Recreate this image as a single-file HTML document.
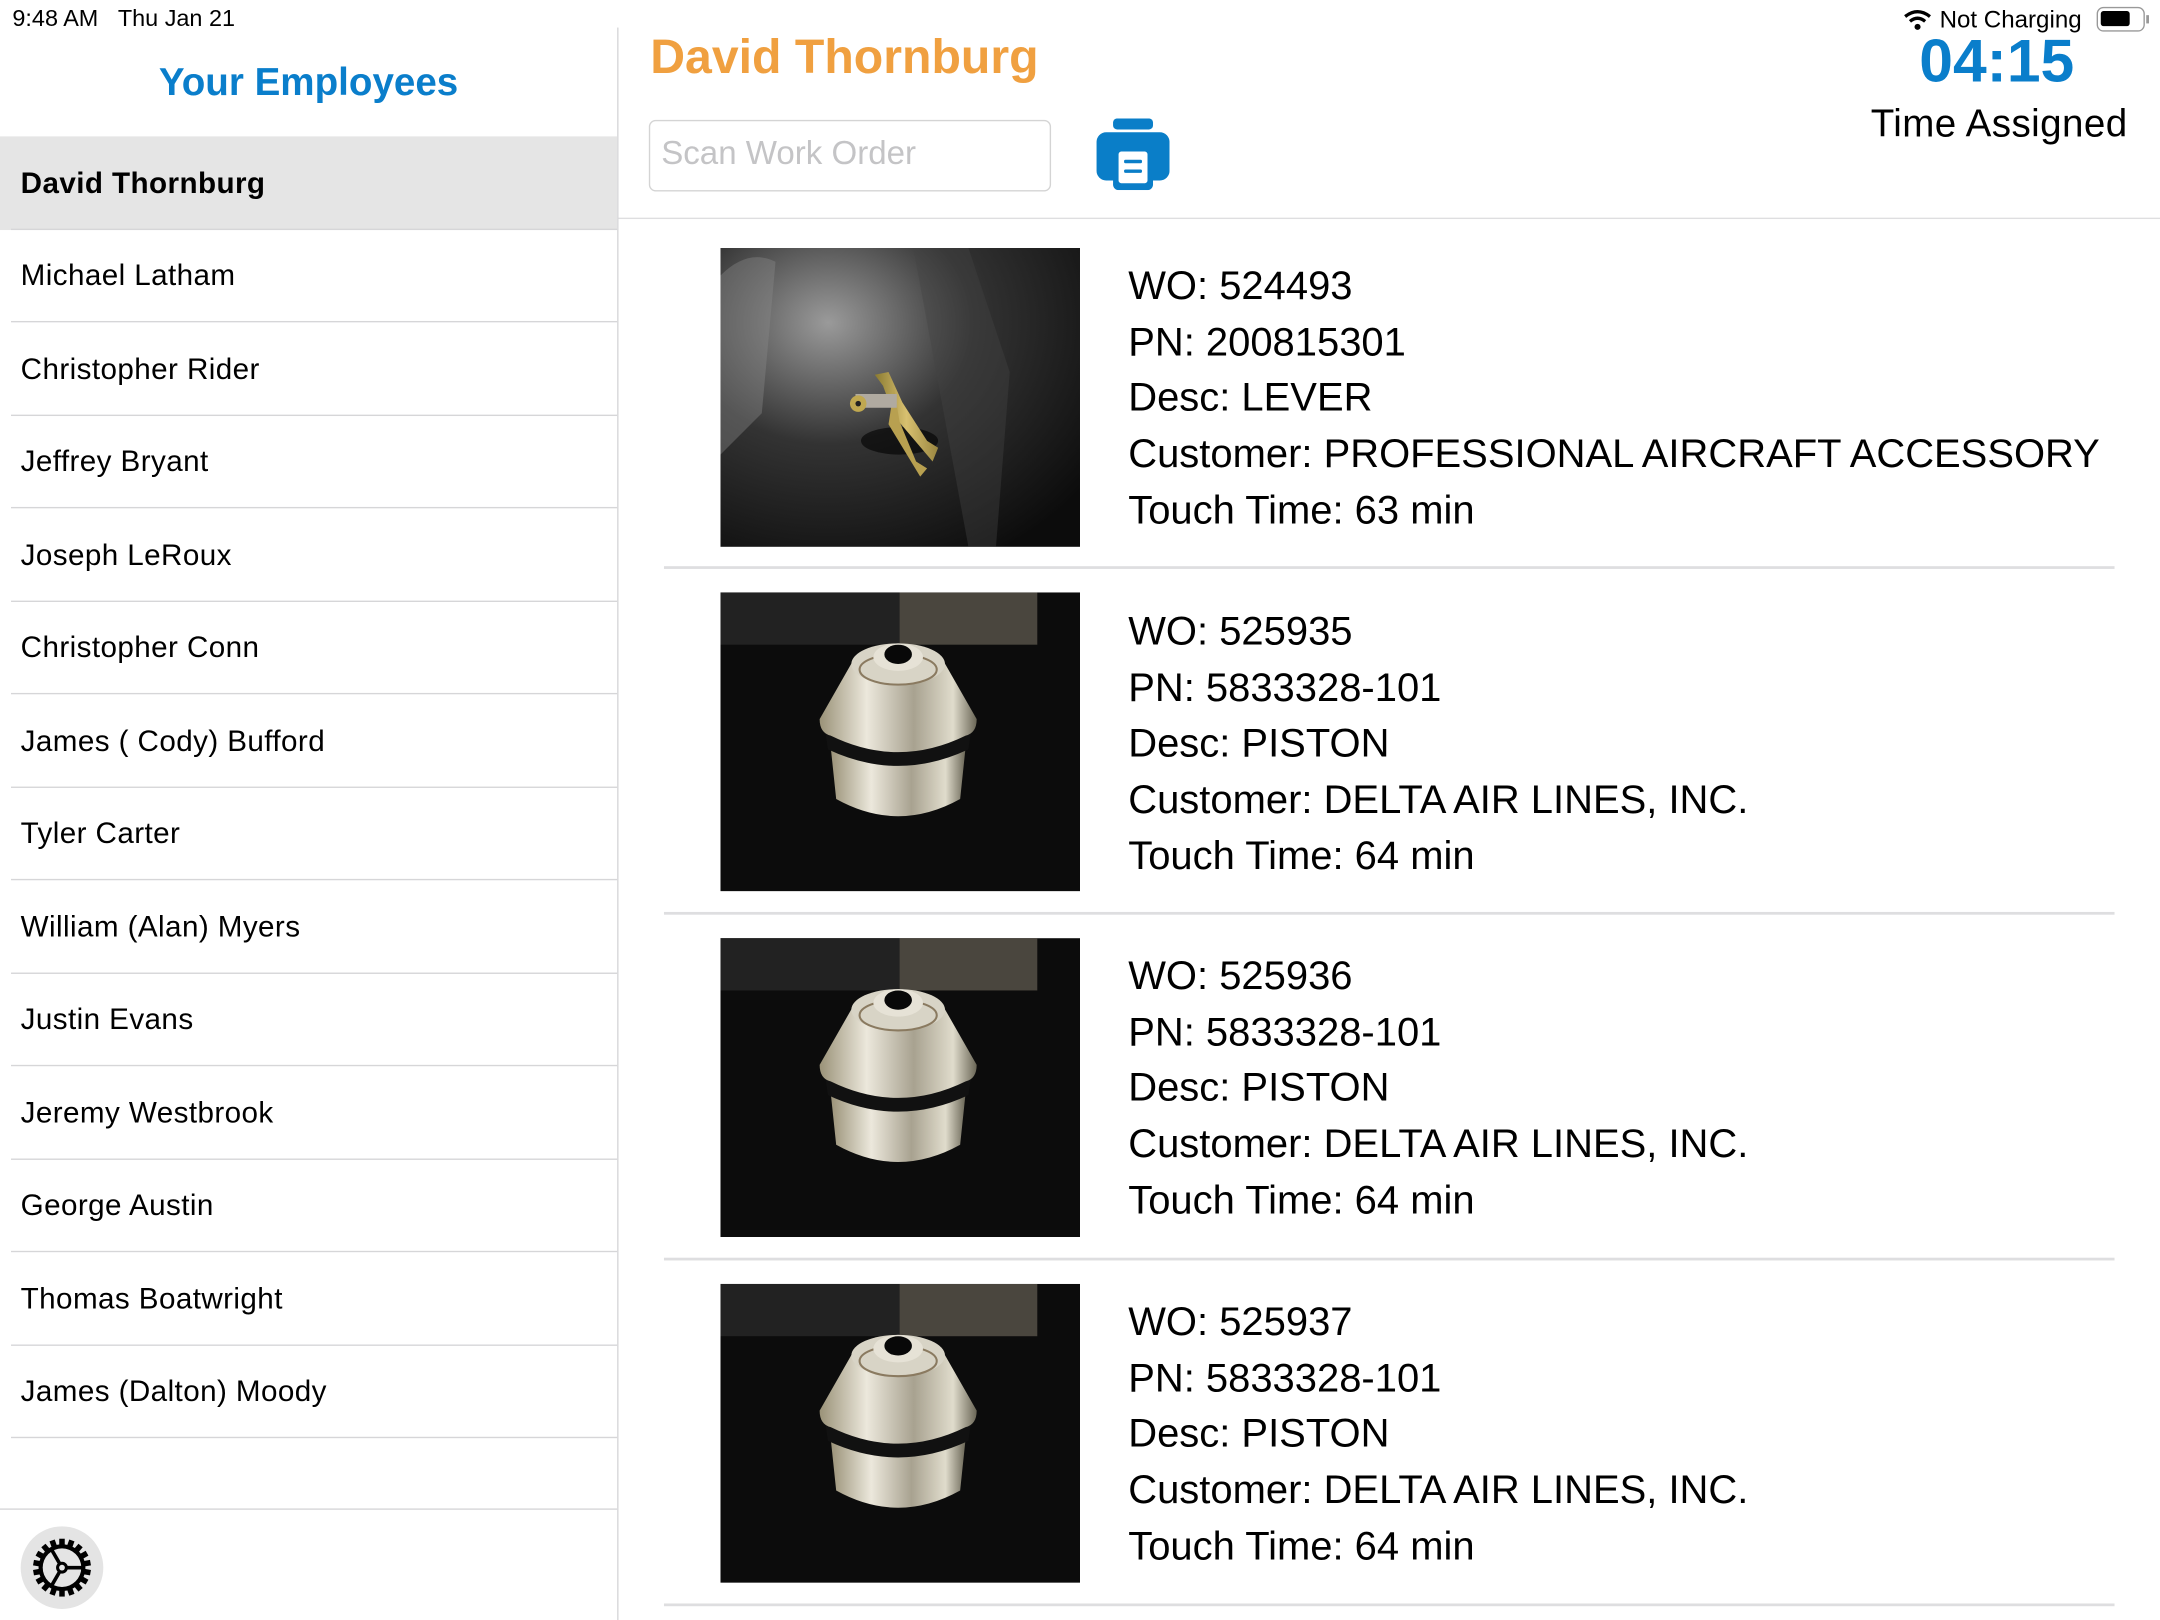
<!DOCTYPE html>
<html><head><meta charset="utf-8"><style>
*{margin:0;padding:0;box-sizing:border-box}
html,body{width:2160px;height:1620px;overflow:hidden;background:#fff}
#w{position:absolute;left:0;top:0;width:1568px;height:1176px;transform:scale(1.377551);transform-origin:0 0;font-family:"Liberation Sans",Arial,sans-serif;color:#000}
.a{position:absolute}
.row{position:absolute;left:0;width:448px;height:67.5px;font-size:21.5px;padding-left:15px;line-height:69px;letter-spacing:0.3px}
.sep{position:absolute;left:8px;width:440px;height:1px;background:#d6d6d8}
.txt{position:absolute;left:819px;font-size:29px;line-height:40.7px}
.img{position:absolute;left:523px;width:261px;height:217px}
.hsep{position:absolute;left:482px;width:1053px;height:2px;background:#dedee0}
</style></head><body><div id="w">
<svg width="0" height="0" style="position:absolute"><defs>
<radialGradient id="bg1" cx="0.3" cy="0.25" r="0.9"><stop offset="0" stop-color="#9a9a9a"/><stop offset="0.45" stop-color="#333"/><stop offset="1" stop-color="#0c0c0c"/></radialGradient>
<linearGradient id="met" x1="0" x2="1"><stop offset="0" stop-color="#9a9278"/><stop offset="0.3" stop-color="#ece8dc"/><stop offset="0.6" stop-color="#a8a290"/><stop offset="0.85" stop-color="#e0dccc"/><stop offset="1" stop-color="#6a6656"/></linearGradient>
<linearGradient id="gold" x1="0" x2="1"><stop offset="0" stop-color="#8a7a30"/><stop offset="0.5" stop-color="#d8c070"/><stop offset="1" stop-color="#9a8640"/></linearGradient>
<symbol id="pist" viewBox="0 0 261 217">
<rect width="261" height="217" fill="#0c0c0c"/>
<rect x="130" y="0" width="100" height="38" fill="#4a463e"/>
<rect x="0" y="0" width="130" height="38" fill="#222"/>
<path d="M80 112 L84 150 Q129 175 174 150 L178 112 Q129 135 80 112Z" fill="url(#met)"/>
<path d="M76 100 Q129 128 182 100 L180 114 Q129 138 78 114Z" fill="#111"/>
<path d="M96 50 L72 92 Q72 102 80 104 Q129 128 178 104 Q186 102 186 92 L162 50Z" fill="url(#met)"/>
<ellipse cx="129" cy="52" rx="34" ry="15" fill="#d8d4c6"/>
<ellipse cx="129" cy="56" rx="28" ry="11" fill="none" stroke="#8a7a60" stroke-width="1.5"/>
<ellipse cx="129" cy="47" rx="18" ry="10" fill="#e6e2d6"/>
<ellipse cx="129" cy="45" rx="10" ry="7" fill="#080808"/>
</symbol>
</defs></svg>

<div class="a" style="left:9px;top:4px;font-size:17px">9:48 AM&nbsp;&nbsp;&nbsp;Thu Jan 21</div>
<svg class="a" style="left:1382px;top:7px" width="20" height="15" viewBox="0 0 20 15"><path d="M1 5 Q10 -2 19 5" stroke="#000" stroke-width="2.4" fill="none"/><path d="M4.5 8.5 Q10 4 15.5 8.5" stroke="#000" stroke-width="2.4" fill="none"/><circle cx="10" cy="12.5" r="2.2"/></svg>
<div class="a" style="left:1408px;top:4px;font-size:17.5px">Not Charging</div>
<div class="a" style="left:1522px;top:5px;width:35px;height:18px;border:1.5px solid #999;border-radius:5px"><div style="margin:2px;width:21px;height:11px;background:#000;border-radius:2px"></div></div>
<div class="a" style="left:1558px;top:11px;width:2px;height:6px;background:#999"></div>

<div class="a" style="left:0;top:44px;width:448px;text-align:center;font-size:28px;font-weight:bold;color:#0a7ecb">Your Employees</div>
<div class="a" style="left:448px;top:20px;width:1px;height:1156px;background:#d6d6d8"></div>
<div class="row" style="top:99px;background:#e5e5e5;font-weight:bold">David Thornburg</div>
<div class="row" style="top:166px">Michael Latham</div>
<div class="row" style="top:234px">Christopher Rider</div>
<div class="row" style="top:301px">Jeffrey Bryant</div>
<div class="row" style="top:369px">Joseph LeRoux</div>
<div class="row" style="top:436px">Christopher Conn</div>
<div class="row" style="top:504px">James ( Cody) Bufford</div>
<div class="row" style="top:571px">Tyler Carter</div>
<div class="row" style="top:639px">William (Alan) Myers</div>
<div class="row" style="top:706px">Justin Evans</div>
<div class="row" style="top:774px">Jeremy Westbrook</div>
<div class="row" style="top:841px">George Austin</div>
<div class="row" style="top:909px">Thomas Boatwright</div>
<div class="row" style="top:976px">James (Dalton) Moody</div>
<div class="sep" style="top:166px"></div><div class="sep" style="top:233px"></div><div class="sep" style="top:301px"></div><div class="sep" style="top:368px"></div><div class="sep" style="top:436px"></div><div class="sep" style="top:503px"></div><div class="sep" style="top:571px"></div><div class="sep" style="top:638px"></div><div class="sep" style="top:706px"></div><div class="sep" style="top:773px"></div><div class="sep" style="top:841px"></div><div class="sep" style="top:908px"></div><div class="sep" style="top:976px"></div><div class="sep" style="top:1043px"></div>
<div class="a" style="left:0;top:1095px;width:448px;height:1px;background:#d6d6d8"></div>
<div class="a" style="left:15px;top:1108px;width:60px;height:60px;border-radius:50%;background:#e4e4e4"></div>
<svg class="a" style="left:23px;top:1116px" width="44" height="44" viewBox="-22 -22 44 44">
<g fill="#000"><circle r="17"/>
<g id="t"><rect x="-2" y="-21" width="4" height="6"/></g>
<use href="#t" transform="rotate(20)"/><use href="#t" transform="rotate(40)"/><use href="#t" transform="rotate(60)"/><use href="#t" transform="rotate(80)"/><use href="#t" transform="rotate(100)"/><use href="#t" transform="rotate(120)"/><use href="#t" transform="rotate(140)"/><use href="#t" transform="rotate(160)"/><use href="#t" transform="rotate(180)"/><use href="#t" transform="rotate(200)"/><use href="#t" transform="rotate(220)"/><use href="#t" transform="rotate(240)"/><use href="#t" transform="rotate(260)"/><use href="#t" transform="rotate(280)"/><use href="#t" transform="rotate(300)"/><use href="#t" transform="rotate(320)"/><use href="#t" transform="rotate(340)"/></g>
<circle r="14" fill="#e4e4e4"/>
<g stroke="#000" stroke-width="2.6"><line x1="3" y1="0" x2="15" y2="0"/><line x1="-1.5" y1="-2.6" x2="-7.5" y2="-13"/><line x1="-1.5" y1="2.6" x2="-7.5" y2="13"/></g>
<circle r="3.2" fill="none" stroke="#000" stroke-width="2.2"/>
</svg>

<div class="a" style="left:472px;top:22px;font-size:35px;font-weight:bold;color:#f0a040">David Thornburg</div>
<div class="a" style="left:471px;top:87px;width:292px;height:52px;border:1px solid #d4d4d4;border-radius:5px;font-size:24px;color:#c4c4c6;padding:10px 0 0 8px">Scan Work Order</div>
<svg class="a" style="left:796px;top:86px" width="53" height="52" viewBox="0 0 53 52">
<rect x="12" y="0" width="29" height="8" rx="3" fill="#0a7ec8"/>
<rect x="0" y="10" width="53" height="35" rx="7" fill="#0a7ec8"/>
<rect x="12" y="20" width="29" height="32" rx="4" fill="#0a7ec8"/>
<rect x="16" y="24" width="21" height="23" rx="2" fill="#fff"/>
<rect x="20" y="30" width="13" height="2.5" rx="1" fill="#0a7ec8"/><rect x="20" y="37" width="13" height="2.5" rx="1" fill="#0a7ec8"/>
</svg>
<div class="a" style="left:1378px;top:20px;width:143px;text-align:center;font-size:44px;font-weight:bold;color:#0a7ecb">04:15</div>
<div class="a" style="left:1358px;top:74px;font-size:28px;letter-spacing:0.3px">Time Assigned</div>
<div class="a" style="left:449px;top:158px;width:1119px;height:1px;background:#dedee0"></div>

<svg class="img" style="top:180px" viewBox="0 0 261 217">
<rect width="261" height="217" fill="url(#bg1)"/>
<path d="M0 20 Q20 0 40 10 L30 120 L0 150Z" fill="#8a8a8a" opacity=".4"/>
<path d="M140 0 L180 0 L210 90 L200 217 L180 217Z" fill="#444" opacity=".4"/>
<ellipse cx="130" cy="140" rx="28" ry="10" fill="#000" opacity=".6"/>
<path d="M112 92 L122 90 L132 112 L150 140 L158 145 L154 155 L126 122 L118 100Z" fill="url(#gold)"/>
<path d="M126 102 L130 126 L142 155 L150 160 L145 166 L122 128 Z" fill="#b8a050"/>
<rect x="98" y="106" width="30" height="10" fill="#b0aaa0"/>
<circle cx="100" cy="113" r="6" fill="#c0a850"/><circle cx="100" cy="113" r="2" fill="#222"/>
</svg>
<div class="txt" style="top:188px">WO: 524493<br>PN: 200815301<br>Desc: LEVER<br>Customer: PROFESSIONAL AIRCRAFT ACCESSORY<br>Touch Time: 63 min</div>
<div class="hsep" style="top:411px"></div>

<svg class="img" style="top:430px"><use href="#pist" width="261" height="217"/></svg>
<div class="txt" style="top:439px">WO: 525935<br>PN: 5833328-101<br>Desc: PISTON<br>Customer: DELTA AIR LINES, INC.<br>Touch Time: 64 min</div>
<div class="hsep" style="top:662px"></div>

<svg class="img" style="top:681px"><use href="#pist" width="261" height="217"/></svg>
<div class="txt" style="top:689px">WO: 525936<br>PN: 5833328-101<br>Desc: PISTON<br>Customer: DELTA AIR LINES, INC.<br>Touch Time: 64 min</div>
<div class="hsep" style="top:913px"></div>

<svg class="img" style="top:932px"><use href="#pist" width="261" height="217"/></svg>
<div class="txt" style="top:940px">WO: 525937<br>PN: 5833328-101<br>Desc: PISTON<br>Customer: DELTA AIR LINES, INC.<br>Touch Time: 64 min</div>
<div class="hsep" style="top:1164px"></div>
</div></body></html>
